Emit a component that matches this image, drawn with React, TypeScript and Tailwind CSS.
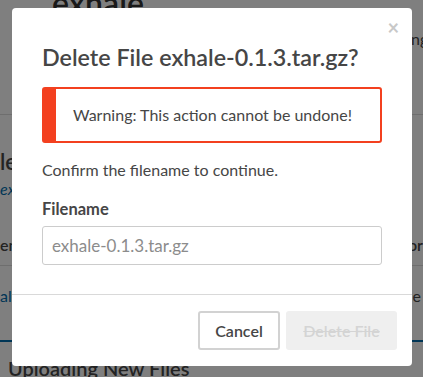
export default function App() {
    return (
        <div className="relative h-[377px] w-[423px] overflow-hidden bg-white font-['Lato','Noto_Sans',sans-serif] text-[#464646]">
            {/* page behind the modal */}
            <div className="flex flex-col">
                <div className="h-[115px] border-b border-[#dcdcdc]">
                    <h1 className="-mt-[15px] ml-[52px] text-[32px] font-semibold leading-[36px] text-[#333]">exhale</h1>
                    <div className="mt-[8px] ml-[411px] whitespace-nowrap text-[16px] leading-[20px]">ng</div>
                </div>
                <div className="flex justify-between pt-[34px]">
                    <span className="text-[22px] font-semibold leading-[26px]">le</span>
                </div>
                <div className="pt-[4px] text-[16px] italic leading-[20px] text-[#006dad]">
                    <span>ex</span>
                </div>
                <div className="flex justify-between border-b border-[#dcdcdc] pt-[36px] pb-[10px] text-[16px] font-semibold leading-[20px]">
                    <span>en</span>
                    <span>or</span>
                </div>
                <div className="flex justify-between border-b-2 border-[#006dad] pt-[20px] pb-[34px] text-[16px] leading-[20px] text-[#006dad]">
                    <span>al</span>
                    <span className="pr-[2px] text-[#464646]">e</span>
                </div>
                <div className="pt-[14px] pl-[8px] text-[20px] font-semibold leading-[24px]">Uploading New Files</div>
            </div>

            {/* backdrop */}
            <div className="absolute inset-0 bg-black/50" />

            {/* modal */}
            <div className="absolute left-[12px] top-[8px] flex h-[358px] w-[400px] flex-col rounded-[4px] bg-white">
                <button className="absolute right-[13px] top-[9px] text-[20px] font-bold leading-[20px] text-[#c8c8c8]">×</button>
                <div className="px-[30px] pt-[34px]">
                    <h2 className="text-[23.3px] font-semibold leading-[30px] text-[#464646]">Delete File exhale-0.1.3.tar.gz?</h2>
                    <div className="mt-[15px] flex h-[56px] items-center rounded-[3px] border-2 border-l-[14px] border-[#f3401f] pl-[17px] text-[16px]">
                        Warning: This action cannot be undone!
                    </div>
                    <p className="mt-[16px] text-[16px] leading-[22px]">Confirm the filename to continue.</p>
                    <label className="mt-[17px] block text-[16.5px] font-bold leading-[22px]">Filename</label>
                    <input
                        className="mt-[6px] block h-[39px] w-full rounded-[3px] border border-[#cccccc] px-[9px] text-[17px] placeholder:text-[#8c8c8c]"
                        placeholder="exhale-0.1.3.tar.gz"
                    />
                </div>
                <div className="mt-auto flex justify-end gap-[6px] border-t border-[#d9d9d9] px-[15px] pt-[16px] pb-[16px]">
                    <button className="h-[39px] w-[82px] rounded-[3px] border-2 border-[#d2d2d2] bg-white text-[16px] font-semibold text-[#464646]">Cancel</button>
                    <button disabled className="h-[39px] w-[111px] rounded-[3px] bg-[#efefef] text-[16px] font-semibold text-[#d4d4d4] line-through">Delete File</button>
                </div>
            </div>
        </div>
    )
}
